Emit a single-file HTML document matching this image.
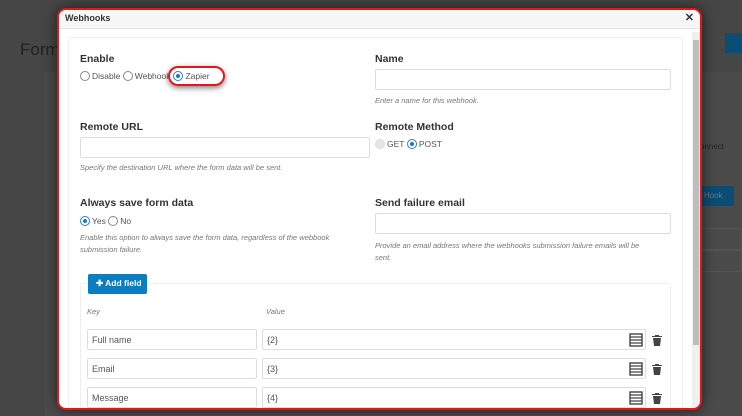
<!DOCTYPE html>
<html style="background:#464646"><head><meta charset="utf-8"><style>
*{box-sizing:border-box;margin:0;padding:0}
html,body{background:#464646 !important}
body{width:742px;height:416px;overflow:hidden;font-family:"Liberation Sans",sans-serif;position:relative}
.a{position:absolute}
.modal{left:57px;top:8px;width:645px;height:402px;background:#fff;border:2px solid #e8141b;border-radius:9px;overflow:hidden;box-shadow:0 0 14px rgba(0,0,0,.6)}
.hdr{left:0;top:0;width:100%;height:19px;background:#f7f7f7;border-bottom:1px solid #e4e4e4;font-size:9px;font-weight:bold;color:#333;padding:3px 0 0 6px}
.lbl{font-size:10.5px;font-weight:bold;color:#333}
.inp{background:#fff;border:1px solid #ddd;border-radius:2px}
.help{font-size:7.5px;font-style:italic;color:#777;line-height:12px}
.rad{font-size:8.5px;color:#555;display:flex;align-items:center}
.r{display:inline-block;width:10px;height:10px;border:1px solid #888;border-radius:50%;margin-right:2px;background:#fff;position:relative}
.r.on{border-color:#2a7fc8}
.r.on:after{content:"";position:absolute;left:2px;top:2px;width:4px;height:4px;border-radius:50%;background:#1a78c2}
.txt{font-size:9px;color:#555;padding:5px 0 0 4px}
</style></head><body>
<div class="a" style="left:0;top:0;width:742px;height:416px;background:#464646"></div>
<div class="a" style="left:20px;top:40px;font-size:17px;color:#222">Form</div>
<div class="a" style="left:45px;top:72px;width:697px;height:344px;background:#4b4b4b"></div>
<div class="a" style="left:725px;top:33px;width:17px;height:20px;background:#0b4d74"></div>
<div class="a" style="left:700px;top:142px;font-size:8px;color:#222">onnect</div>
<div class="a" style="left:700px;top:186px;width:34px;height:20px;background:#0b4d74;border-radius:2px;color:#678;font-size:8px;padding:5px 0 0 4px">Hook</div>
<div class="a" style="left:700px;top:228px;width:42px;height:22px;border:1px solid #555"></div>
<div class="a" style="left:700px;top:250px;width:42px;height:22px;border:1px solid #555"></div>
<div class="modal a">
 <div class="hdr a">Webhooks</div>
 <div class="a" style="right:6px;top:1px;font-size:11px;font-weight:bold;color:#333">✕</div>
 <div class="a" style="left:633px;top:22px;width:8px;height:378px;background:#f0f0f0"></div>
 <div class="a" style="left:634px;top:30px;width:6px;height:305px;background:#bdbdbd"></div>
 <div class="a" style="left:9px;top:27px;width:615px;height:380px;border:1px solid #eee;border-radius:3px"></div>
 <div class="a lbl" style="left:21px;top:43px">Enable</div>
 <div class="a rad" style="left:21px;top:61px"><span class="r"></span>Disable&nbsp;<span class="r"></span>Webhook<span class="r on" style="margin-left:3px"></span>Zapier</div>
 <div class="a" style="left:109px;top:56px;width:57px;height:20px;border:2px solid #e8141b;border-radius:10px;box-shadow:0 2px 6px rgba(0,0,0,.5)"></div>
 <div class="a lbl" style="left:316px;top:43px">Name</div>
 <div class="a inp" style="left:316px;top:59px;width:296px;height:21px"></div>
 <div class="a help" style="left:316px;top:85px">Enter a name for this webhook.</div>
 <div class="a lbl" style="left:21px;top:111px">Remote URL</div>
 <div class="a inp" style="left:21px;top:127px;width:290px;height:21px"></div>
 <div class="a help" style="left:21px;top:152px">Specify the destination URL where the form data will be sent.</div>
 <div class="a lbl" style="left:316px;top:111px">Remote Method</div>
 <div class="a rad" style="left:316px;top:129px"><span class="r" style="background:#e6e6e6;border-color:#ddd"></span>GET&nbsp;<span class="r on"></span>POST</div>
 <div class="a lbl" style="left:21px;top:187px">Always save form data</div>
 <div class="a rad" style="left:21px;top:206px"><span class="r on"></span>Yes&nbsp;<span class="r"></span>No</div>
 <div class="a help" style="left:21px;top:222px">Enable this option to always save the form data, regardless of the webbook<br>submission failure.</div>
 <div class="a lbl" style="left:316px;top:187px">Send failure email</div>
 <div class="a inp" style="left:316px;top:203px;width:296px;height:21px"></div>
 <div class="a help" style="left:316px;top:230px">Provide an email address where the webhooks submission failure emails will be<br>sent.</div>
 <div class="a" style="left:21px;top:273px;width:591px;height:140px;border:1px solid #eee;border-radius:3px"></div>
 <div class="a" style="left:29px;top:264px;width:59px;height:20px;background:#0b7dc1;border-radius:2px;color:#fff;font-size:8.5px;font-weight:bold;padding:4px 0 0 8px">✚ Add field</div>
 <div class="a help" style="left:28px;top:296px">Key</div>
 <div class="a help" style="left:207px;top:296px">Value</div>
 <div class="a inp txt" style="left:28px;top:319px;width:170px;height:21px">Full name</div>
 <div class="a inp txt" style="left:203px;top:319px;width:384px;height:21px">{2}</div>
 <div class="a inp txt" style="left:28px;top:348px;width:170px;height:21px">Email</div>
 <div class="a inp txt" style="left:203px;top:348px;width:384px;height:21px">{3}</div>
 <div class="a inp txt" style="left:28px;top:377px;width:170px;height:21px">Message</div>
 <div class="a inp txt" style="left:203px;top:377px;width:384px;height:21px">{4}</div>
 <svg class="a" style="left:0;top:0" width="640" height="400">
  <g fill="#444">
   <g id="ic"><rect x="571" y="324" width="12" height="12" fill="none" stroke="#444" stroke-width="1.4"/><path d="M571 327h12M571 330h12M571 333h12" stroke="#444" stroke-width="1.2"/>
   <path d="M593 326h10v1h-10zM596 325h4v1h-4zM594 328h8l-1 8h-6z"/></g>
   <use href="#ic" y="29"/><use href="#ic" y="58"/>
  </g>
 </svg>
</div>
</body></html>
